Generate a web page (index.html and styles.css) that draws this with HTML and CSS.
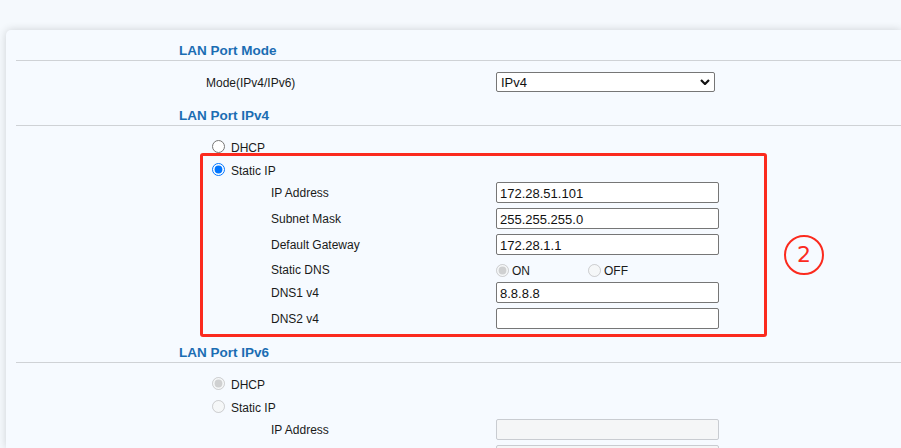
FILE: index.html
```html
<!DOCTYPE html>
<html>
<head>
<meta charset="utf-8"/>
<link rel="stylesheet" href="styles.css">
<title>LAN Port</title>
</head>
<body>
<div class="card">

  <div class="sec-title">LAN Port Mode</div>
  <div class="row row-mode">
    <div class="lbl lbl-mode">Mode(IPv4/IPv6)</div>
    <div class="field">
      <span class="select-wrap">
        <select class="sel">
          <option>IPv4</option>
          <option>IPv6</option>
          <option>IPv4 &amp; IPv6</option>
        </select>
        <svg class="chev" width="10" height="6" viewBox="0 0 10 6"><path d="M1 1 L5 5 L9 1" fill="none" stroke="#111" stroke-width="2.2"/></svg>
      </span>
    </div>
  </div>

  <div class="sec-title">LAN Port IPv4</div>
  <div class="sec-body">
    <div class="row row-radio">
      <label class="opt"><input type="radio" name="v4mode"> DHCP</label>
    </div>
    <div class="row row-radio">
      <label class="opt"><input type="radio" name="v4mode" checked> Static IP</label>
    </div>
    <div class="row row-input">
      <div class="lbl lbl-sub">IP Address</div>
      <div class="field"><input class="txt" type="text" value="172.28.51.101"></div>
    </div>
    <div class="row row-input">
      <div class="lbl lbl-sub">Subnet Mask</div>
      <div class="field"><input class="txt" type="text" value="255.255.255.0"></div>
    </div>
    <div class="row row-input">
      <div class="lbl lbl-sub">Default Gateway</div>
      <div class="field"><input class="txt" type="text" value="172.28.1.1"></div>
    </div>
    <div class="row row-dns">
      <div class="lbl lbl-sub">Static DNS</div>
      <div class="field">
        <label class="dns-opt"><input type="radio" name="sdns" checked disabled>ON</label>
        <label class="dns-opt"><input type="radio" name="sdns" disabled>OFF</label>
      </div>
    </div>
    <div class="row row-input">
      <div class="lbl lbl-sub">DNS1 v4</div>
      <div class="field"><input class="txt" type="text" value="8.8.8.8"></div>
    </div>
    <div class="row row-input">
      <div class="lbl lbl-sub">DNS2 v4</div>
      <div class="field"><input class="txt" type="text" value=""></div>
    </div>
  </div>

  <div class="sec-title">LAN Port IPv6</div>
  <div class="sec-body">
    <div class="row row-radio">
      <label class="opt"><input type="radio" name="v6mode" checked disabled> DHCP</label>
    </div>
    <div class="row row-radio">
      <label class="opt"><input type="radio" name="v6mode" disabled> Static IP</label>
    </div>
    <div class="row row-input">
      <div class="lbl lbl-sub">IP Address</div>
      <div class="field"><input class="txt" type="text" disabled></div>
    </div>
    <div class="row row-input">
      <div class="lbl lbl-sub"></div>
      <div class="field"><input class="txt" type="text" disabled></div>
    </div>
  </div>

  <!-- annotation marks -->
  <div class="mark-box"></div>
  <div class="mark-num">2</div>
</div>
</body>
</html>
```

FILE: styles.css
```css
html, body {
  margin: 0;
  padding: 0;
  background-color: #f5f9fd;
  overflow: hidden;
  height: 448px;
}

body {
  font-family: "Liberation Sans", Arial, sans-serif;
  font-size: 12px;
  color: #1a1a1a;
}

.card {
  position: relative;
  margin: 30px 0 0 6px;
  width: 885px;
  height: 417px;
  padding: 1px 0 0 10px;
  overflow: hidden;
  background-color: #f6faff;
  border-radius: 5px 0 0 0;
  box-shadow: 0 0 9px rgba(0, 0, 0, 0.16);
}

.sec-title {
  padding: 10px 0 0 163px;
  height: 19px;
  line-height: 20px;
  font-size: 13.5px;
  font-weight: bold;
  color: #1b6db3;
  border-bottom: 1px solid #cfd2d6;
}

.sec-body {
  padding-top: 9px;
}

.row {
  display: flex;
}

.lbl {
  width: 480px;
  flex: none;
  box-sizing: border-box;
}

.lbl-mode {
  padding-left: 190px;
  line-height: 22px;
}

.lbl-sub {
  padding-left: 255px;
  line-height: 23px;
}

.row-mode {
  padding: 11px 0 4px 0;
  height: 20px;
}

.row-radio {
  height: 23px;
  align-items: center;
}

.row-radio .opt {
  padding-top: 2px;
}

.row-input {
  height: 26px;
  padding-top: 1px;
  box-sizing: border-box;
}

.row-dns {
  height: 22px;
  align-items: center;
}

.row-dns .field {
  display: flex;
  align-items: center;
}

.opt {
  display: flex;
  align-items: center;
  gap: 6px;
  padding-left: 196px;
}

.opt input, .dns-opt input {
  margin: 0;
  width: 13px;
  height: 13px;
}

.row-radio .opt input {
  margin-top: -2px;
}

.dns-opt {
  display: flex;
  align-items: center;
  gap: 3px;
  width: 92px;
  line-height: 16px;
  padding-top: 2px;
}

.dns-opt input {
  margin-top: -2px;
}

.select-wrap {
  position: relative;
  display: inline-block;
}

.sel {
  -webkit-appearance: none;
  appearance: none;
  width: 219px;
  height: 20px;
  margin: 0;
  padding: 1px 0 0 4px;
  border: 1px solid #767676;
  border-radius: 2px;
  background: #ffffff;
  font-family: "Liberation Sans", Arial, sans-serif;
  font-size: 13px;
  color: #111;
  display: block;
}

.chev {
  position: absolute;
  right: 5px;
  top: 7px;
  pointer-events: none;
}

.txt {
  display: block;
  width: 223px;
  height: 21px;
  margin: 0;
  padding: 1px 3px 0 3px;
  box-sizing: border-box;
  border: 1px solid #767676;
  border-radius: 2px;
  background: #ffffff;
  font-family: "Liberation Sans", Arial, sans-serif;
  font-size: 13px;
  color: #111;
}

.txt:disabled {
  background: #f5f6f7;
  border-color: #c9ccd1;
}

.mark-box {
  position: absolute;
  left: 194px;
  top: 123px;
  width: 561px;
  height: 178px;
  border: 3px solid #fb2a1e;
  border-radius: 3px;
}

.mark-num {
  position: absolute;
  left: 778px;
  top: 205px;
  width: 36px;
  height: 36px;
  border: 2px solid #fb2a1e;
  border-radius: 50%;
  color: #fb2a1e;
  font-family: "DejaVu Sans", sans-serif;
  font-size: 22px;
  line-height: 36px;
  text-align: center;
}
```
